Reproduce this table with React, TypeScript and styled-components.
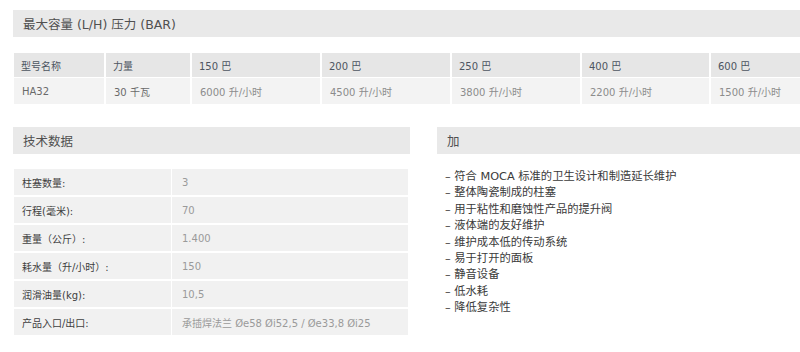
import { Fragment } from "react";
import styled, { createGlobalStyle } from "styled-components";

const GlobalStyle = createGlobalStyle`
  html, body {
    margin: 0;
    padding: 0;
    background: #ffffff;
    overflow: hidden;
  }
  body {
    font-family: "DejaVu Sans", "Noto Sans CJK SC", sans-serif;
    color: #444;
  }
`;

const Page = styled.div`
  width: 800px;
  padding: 10px 0 0 13px;
  box-sizing: border-box;
  display: flex;
  flex-direction: column;
`;

const SectionTitle = styled.div`
  background: #e9e9e9;
  height: 27px;
  display: flex;
  align-items: center;
  padding-left: 10px;
  font-size: 12.5px;
  color: #505050;
`;

const PressureGrid = styled.div`
  margin: 16px 0 0 1px;
  display: grid;
  grid-template-columns: 90px 84px 128px 128px 128px 127px 1fr;
  column-gap: 2px;
  row-gap: 1px;
  font-size: 10px;
`;

const HeadCell = styled.div`
  background: #e6e6e6;
  color: #4d5561;
  height: 24px;
  display: flex;
  align-items: center;
  padding-left: 7px;
  white-space: nowrap;
`;

const DataCell = styled.div<{ $muted?: boolean }>`
  background: #f3f3f3;
  color: ${({ $muted }) => ($muted ? "#8c8c8c" : "#6a6a6a")};
  height: 26px;
  display: flex;
  align-items: center;
  padding-left: 8px;
  white-space: nowrap;
`;

const Columns = styled.div`
  display: flex;
  gap: 27px;
  margin-top: 23px;
`;

const LeftColumn = styled.div`
  width: 397px;
  display: flex;
  flex-direction: column;
`;

const RightColumn = styled.div`
  flex: 1;
  display: flex;
  flex-direction: column;
`;

const SpecGrid = styled.div`
  margin: 15px 2px 0 1px;
  display: grid;
  grid-template-columns: 157px 1fr;
  column-gap: 1px;
  row-gap: 2px;
  font-size: 10px;
`;

const SpecLabel = styled.div`
  background: #f1f1f1;
  color: #404040;
  height: 26px;
  display: flex;
  align-items: center;
  padding-left: 8px;
  white-space: nowrap;
`;

const SpecValue = styled.div`
  background: #f1f1f1;
  color: #9a9a9a;
  height: 26px;
  display: flex;
  align-items: center;
  padding-left: 10px;
  white-space: nowrap;
`;

const FeatureList = styled.ul`
  list-style: none;
  margin: 15px 0 0;
  padding: 0 0 0 8px;
  font-size: 11.3px;
  line-height: 16.4px;
  color: #3a3a3a;
`;

const Feature = styled.li`
  white-space: nowrap;
`;

const pressures = [
  { bar: "150 巴", flow: "6000 升/小时" },
  { bar: "200 巴", flow: "4500 升/小时" },
  { bar: "250 巴", flow: "3800 升/小时" },
  { bar: "400 巴", flow: "2200 升/小时" },
  { bar: "600 巴", flow: "1500 升/小时" },
];

const specs = [
  ["柱塞数量:", "3"],
  ["行程(毫米):", "70"],
  ["重量（公斤）:", "1.400"],
  ["耗水量（升/小时）:", "150"],
  ["润滑油量(kg):", "10,5"],
  ["产品入口/出口:", "承插焊法兰 Øe58 Øi52,5 / Øe33,8 Øi25"],
];

const features = [
  "符合 MOCA 标准的卫生设计和制造延长维护",
  "整体陶瓷制成的柱塞",
  "用于粘性和磨蚀性产品的提升阀",
  "液体端的友好维护",
  "维护成本低的传动系统",
  "易于打开的面板",
  "静音设备",
  "低水耗",
  "降低复杂性",
];

const App = () => {
  return (
    <Page>
      <GlobalStyle />
      <SectionTitle>最大容量 (L/H) 压力 (BAR)</SectionTitle>
      <PressureGrid>
        <HeadCell>型号名称</HeadCell>
        <HeadCell>力量</HeadCell>
        {pressures.map((p) => (
          <HeadCell key={p.bar}>{p.bar}</HeadCell>
        ))}
        <DataCell>HA32</DataCell>
        <DataCell>30 千瓦</DataCell>
        {pressures.map((p) => (
          <DataCell key={p.flow} $muted>
            {p.flow}
          </DataCell>
        ))}
      </PressureGrid>
      <Columns>
        <LeftColumn>
          <SectionTitle>技术数据</SectionTitle>
          <SpecGrid>
            {specs.map(([label, value]) => (
              <Fragment key={label}>
                <SpecLabel>{label}</SpecLabel>
                <SpecValue>{value}</SpecValue>
              </Fragment>
            ))}
          </SpecGrid>
        </LeftColumn>
        <RightColumn>
          <SectionTitle>加</SectionTitle>
          <FeatureList>
            {features.map((f) => (
              <Feature key={f}>– {f}</Feature>
            ))}
          </FeatureList>
        </RightColumn>
      </Columns>
    </Page>
  );
};

export default App;
